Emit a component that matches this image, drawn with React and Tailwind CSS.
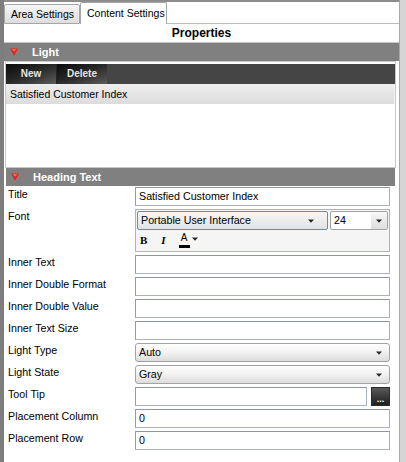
import React from "react";

const sans = "font-['Liberation_Sans',Arial,sans-serif]";

function DownArrow({ className = "" }) {
  return (
    <svg width="6" height="4" viewBox="0 0 6 4" className={className}>
      <path d="M0 0.5h6L3 3.8z" fill="#262626" />
    </svg>
  );
}

// expander glyph in the section headers
function RedTriangle({ className = "" }) {
  return (
    <svg width="8" height="8" viewBox="0 0 8 8" className={`shrink-0 ${className}`}>
      <polygon points="0,0.5 8,0.5 4,7.8" fill="#e3211d" />
      <polygon points="1.4,1.3 6.6,1.3 4,3.6" fill="#ff7a52" />
    </svg>
  );
}

function SectionHeader({ title, className = "", triMl, textMl }) {
  return (
    <div className={`h-[18px] bg-[#808080] flex items-center shrink-0 ${className}`}>
      <RedTriangle className={triMl} />
      <span className={`${textMl} text-white font-bold text-[11px] leading-none`}>{title}</span>
    </div>
  );
}

function TextBox({ value = "", className = "w-[255px]" }) {
  return (
    <div
      className={`${className} h-[19px] border border-[#a9b1ba] border-t-[#8e959d] border-l-[#969ca4] bg-white flex items-center pl-[3px] text-[10.7px] leading-none`}
    >
      {value}
    </div>
  );
}

function DropDown({ value }) {
  return (
    <div className="w-[255px] h-[19px] rounded-[3px] border border-[#a3a3a3] bg-gradient-to-b from-[#ffffff] via-[#f1f1f1] to-[#dcdcdc] flex items-center justify-between pl-[3px] pr-[7px] text-[10.7px] leading-none">
      <span>{value}</span>
      <DownArrow />
    </div>
  );
}

function Row({ label, children, className = "" }) {
  return (
    <div className={`flex items-start ${className}`}>
      <div className="w-[131px] pl-[4px] pt-[1px] leading-[13px] text-[10.7px] shrink-0">{label}</div>
      {children}
    </div>
  );
}

function FontEditor() {
  return (
    <div className="w-[255px] h-[43px] border border-[#b2b2b2] bg-[#f5f5f5] p-px flex flex-col">
      <div className="flex gap-[2px]">
        <div className="w-[191px] h-[19px] rounded-[2px] border border-[#6f8aa3] bg-gradient-to-b from-[#f7f7f7] to-[#e2e2e2] flex items-center justify-between pl-[3px] pr-[13px] text-[10.7px] leading-none">
          <span>Portable User Interface</span>
          <DownArrow />
        </div>
        <div className="w-[58px] h-[19px] rounded-[2px] border border-[#a3a3a3] bg-white flex items-center text-[10.7px] leading-none overflow-hidden">
          <span className="pl-[3px] flex-1">24</span>
          <div className="w-[16px] h-full bg-gradient-to-b from-[#f8f8f8] to-[#dedede] flex items-center justify-center">
            <DownArrow />
          </div>
        </div>
      </div>
      <div className="flex items-center h-[20px] pl-[3px]">
        <span className="font-['Liberation_Serif',serif] font-bold text-[11px] leading-none">B</span>
        <span className="ml-[14px] font-['Liberation_Serif',serif] font-bold italic text-[11px] leading-none">I</span>
        <div className="ml-[13px] flex flex-col items-center">
          <span className="text-[10px] leading-none">A</span>
          <div className="w-[11px] h-[3px] bg-black mt-[2px]" />
        </div>
        <DownArrow className="ml-[2px] mb-[3px]" />
      </div>
    </div>
  );
}

export default function App() {
  return (
    <div className={`w-[406px] h-[462px] overflow-hidden flex bg-white text-black ${sans}`}>
      <div className="w-[4px] shrink-0 bg-[#7d7d7d]" />
      <div className="w-[396px] shrink-0 border-r border-[#a8a8a8] flex flex-col">
        {/* tab strip */}
        <div className="h-[24px] shrink-0 border-t-2 border-[#8c8c8c] flex items-end">
          <div className="w-[76px] h-[20px] border border-[#a6a6a6] rounded-t-[2px] bg-gradient-to-b from-[#f7f7f7] to-[#dddddd] flex items-center pl-[6px] text-[10.5px] leading-none">
            Area Settings
          </div>
          <div className="w-[87px] h-[22px] border border-b-0 border-[#a6a6a6] rounded-t-[2px] bg-white flex items-center pl-[6px] text-[10.5px] leading-none">
            Content Settings
          </div>
          <div className="flex-1 border-b border-[#bdbdbd]" />
        </div>

        <div className="h-[19px] shrink-0 border-b border-[#c6c6c6] flex items-center justify-center font-bold text-[12px] leading-none">
          Properties
        </div>

        <SectionHeader title="Light" triMl="ml-[6px]" textMl="ml-[14px]" />

        {/* light items */}
        <div className="ml-px w-[391px] h-[107px] shrink-0 border border-[#c8c8c8] pt-[2px] flex flex-col">
          <div className="h-[20px] bg-[#454545] flex">
            <div className="w-[51px] h-full border-r border-[#222] bg-gradient-to-br from-[#0c0c0c] via-[#2a2a2a] to-[#5c5c5c] flex items-center justify-center text-[#e6e6e6] font-bold text-[10px] leading-none">
              New
            </div>
            <div className="w-[50px] h-full bg-gradient-to-br from-[#0c0c0c] via-[#2a2a2a] to-[#5c5c5c] flex items-center justify-center text-[#e6e6e6] font-bold text-[10px] leading-none">
              Delete
            </div>
          </div>
          <div className="flex-1 bg-white">
            <div className="h-[20px] bg-gradient-to-b from-[#eeeeee] to-[#dcdcdc] border-r border-[#f4f4f4] flex items-center pl-[4px] text-[10.5px] leading-none">
              Satisfied Customer Index
            </div>
          </div>
        </div>

        <SectionHeader title="Heading Text" className="ml-[2px] w-[389px]" triMl="ml-[5px]" textMl="ml-[14px]" />

        {/* form */}
        <div className="pt-px flex flex-col gap-[3px]">
          <Row label="Title">
            <TextBox value="Satisfied Customer Index" />
          </Row>
          <Row label="Font">
            <FontEditor />
          </Row>
          <Row label="Inner Text">
            <TextBox />
          </Row>
          <Row label="Inner Double Format">
            <TextBox />
          </Row>
          <Row label="Inner Double Value">
            <TextBox />
          </Row>
          <Row label="Inner Text Size">
            <TextBox />
          </Row>
          <Row label="Light Type">
            <DropDown value="Auto" />
          </Row>
          <Row label="Light State">
            <DropDown value="Gray" />
          </Row>
          <Row label="Tool Tip">
            <div className="flex gap-[4px]">
              <TextBox className="w-[232px]" />
              <div className="w-[19px] h-[19px] border border-[#2a2a2a] bg-gradient-to-b from-[#5a5a5a] to-[#1f1f1f] flex items-end justify-center pb-[3px]">
                <span className="text-white font-bold text-[9px] leading-[6px]">...</span>
              </div>
            </div>
          </Row>
          <Row label="Placement Column">
            <TextBox value="0" />
          </Row>
          <Row label="Placement Row">
            <TextBox value="0" />
          </Row>
        </div>
      </div>
      <div className="w-[6px] shrink-0 bg-[#d5d5d5]" />
    </div>
  );
}
